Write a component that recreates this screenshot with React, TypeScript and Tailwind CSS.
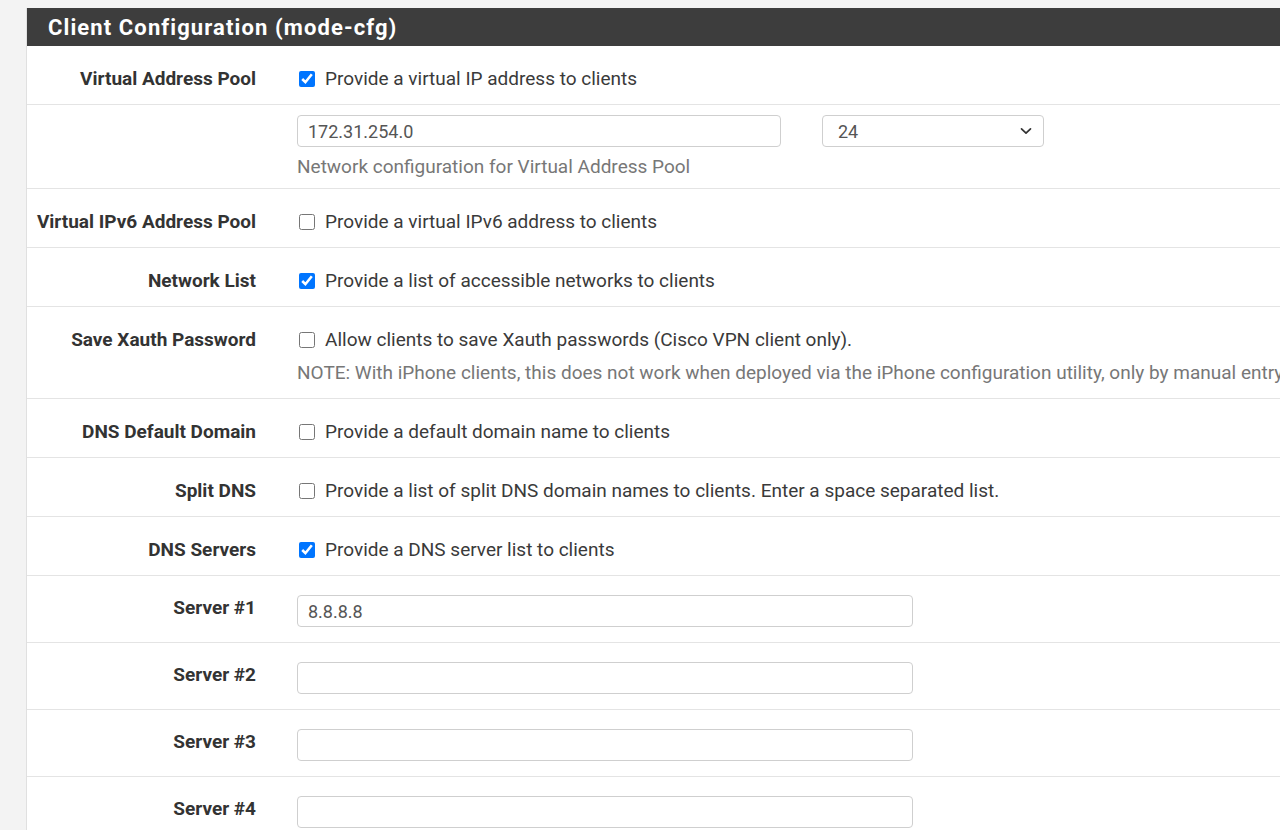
import React from "react";

const font = { fontFamily: "Roboto, 'Noto Sans', Arial, sans-serif" };

interface CheckRowProps {
  label: string;
  text: string;
  checked?: boolean;
  note?: string;
}

const Label: React.FC<{ children: React.ReactNode; top?: string }> = ({ children, top = "pt-[20px]" }) => (
  <div className={`w-[250px] shrink-0 ${top} pr-[21px] text-right text-[19px] leading-[26px] font-bold text-[#333]`}>
    {children}
  </div>
);

const CheckRow: React.FC<CheckRowProps> = ({ label, text, checked, note }) => (
  <div className="flex border-b border-[#e4e4e4]">
    <Label>{label}</Label>
    <div className="flex-1 pl-[20px] pt-[20px] pb-[12px] whitespace-nowrap overflow-hidden">
      <label className="flex items-center gap-[10px] text-[19px] leading-[26px] text-[#3a3a3a]">
        <input
          type="checkbox"
          defaultChecked={checked}
          className="ml-[2px] h-4 w-4 accent-[#0075ff]"
        />
        {text}
      </label>
      {note && (
        <div className="mt-[7px] text-[19px] leading-[26px] text-[#777]">{note}</div>
      )}
    </div>
  </div>
);

const ServerRow: React.FC<{ label: string; value?: string }> = ({ label, value }) => (
  <div className="flex border-b border-[#e4e4e4]">
    <Label top="pt-[19px]">{label}</Label>
    <div className="flex-1 pl-[20px] pt-[19px] pb-[15px]">
      <input
        type="text"
        defaultValue={value}
        className="h-[32px] w-[616px] rounded-[4px] border border-[#cfcfcf] bg-white px-[10px] text-[18px] text-[#555] outline-none"
      />
    </div>
  </div>
);

export default function App() {
  return (
    <div className="min-h-[830px] bg-[#f3f3f3] pt-2" style={font}>
      <div className="ml-[26px] border-l border-[#e0e0e0] bg-white">
        <div className="flex h-[38px] items-center bg-[#3d3d3d] pl-[21px]">
          <h2 className="text-[22px] font-bold tracking-[1.1px] text-white">
            Client Configuration (mode-cfg)
          </h2>
        </div>

        <CheckRow
          label="Virtual Address Pool"
          text="Provide a virtual IP address to clients"
          checked
        />

        <div className="flex border-b border-[#e4e4e4]">
          <div className="w-[250px] shrink-0" />
          <div className="flex-1 pl-[20px] pt-[10px] pb-[8px]">
            <div className="flex items-center gap-[41px]">
              <input
                type="text"
                defaultValue="172.31.254.0"
                className="h-[32px] w-[484px] rounded-[4px] border border-[#cfcfcf] bg-white px-[10px] text-[18px] text-[#555] outline-none"
              />
              <div className="relative w-[222px]">
                <select
                  defaultValue="24"
                  className="h-[32px] w-full appearance-none rounded-[4px] border border-[#cfcfcf] bg-white px-[15px] text-[18px] text-[#555] outline-none"
                  style={font}
                >
                  {Array.from({ length: 32 }, (_, i) => 32 - i).map((n) => (
                    <option key={n} value={String(n)}>
                      {n}
                    </option>
                  ))}
                </select>
                <svg
                  className="pointer-events-none absolute right-[12px] top-[12px]"
                  width="12"
                  height="8"
                  viewBox="0 0 12 8"
                  fill="none"
                >
                  <path d="M1.5 1.8 L6 6.2 L10.5 1.8" stroke="#333" strokeWidth="1.7" strokeLinecap="round" strokeLinejoin="round" />
                </svg>
              </div>
            </div>
            <div className="mt-[7px] text-[19px] leading-[26px] text-[#777]">
              Network configuration for Virtual Address Pool
            </div>
          </div>
        </div>

        <CheckRow
          label="Virtual IPv6 Address Pool"
          text="Provide a virtual IPv6 address to clients"
        />
        <CheckRow
          label="Network List"
          text="Provide a list of accessible networks to clients"
          checked
        />
        <CheckRow
          label="Save Xauth Password"
          text="Allow clients to save Xauth passwords (Cisco VPN client only)."
          note="NOTE: With iPhone clients, this does not work when deployed via the iPhone configuration utility, only by manual entry."
        />
        <CheckRow
          label="DNS Default Domain"
          text="Provide a default domain name to clients"
        />
        <CheckRow
          label="Split DNS"
          text="Provide a list of split DNS domain names to clients. Enter a space separated list."
        />
        <CheckRow
          label="DNS Servers"
          text="Provide a DNS server list to clients"
          checked
        />

        <ServerRow label="Server #1" value="8.8.8.8" />
        <ServerRow label="Server #2" />
        <ServerRow label="Server #3" />
        <ServerRow label="Server #4" />
      </div>
    </div>
  );
}
